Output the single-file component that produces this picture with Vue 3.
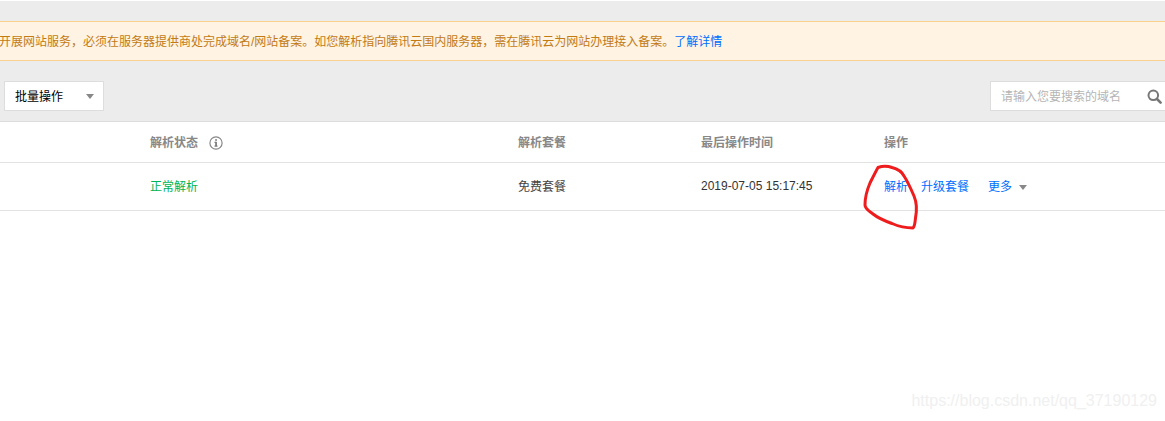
<script setup>
const headers = ['解析套餐', '最后操作时间', '操作']
const actions = ['升级套餐']
</script>

<template>
  <div class="page">
    <div class="gray-top">
      <div class="notice">
        <span>开展网站服务，必须在服务器提供商处完成域名/网站备案。如您解析指向腾讯云国内服务器，需在腾讯云为网站办理接入备案。</span><a class="link">了解详情</a>
      </div>
      <div class="toolbar">
        <div class="batch">
          <span>批量操作</span>
          <i class="caret batch-caret"></i>
        </div>
        <div class="search">
          <span class="placeholder">请输入您要搜索的域名</span>
          <svg class="search-icon" width="15" height="15" viewBox="0 0 15 15">
            <circle cx="6.300" cy="6.300" r="4.800" fill="none" stroke="#777" stroke-width="2" />
            <path d="M10 10 13.600 13.600" stroke="#777" stroke-width="2.600" stroke-linecap="round" />
          </svg>
        </div>
      </div>
    </div>

    <div class="row head">
      <div class="status-head">
        <span>解析状态</span>
        <svg class="info" width="14" height="14" viewBox="0 0 14 14">
          <circle cx="7" cy="7" r="6.100" fill="none" stroke="#888" stroke-width="1.200" />
          <rect x="6.200" y="5.800" width="1.700" height="4.600" fill="#777" />
          <rect x="5.400" y="5.800" width="1.600" height="1" fill="#777" />
          <rect x="5.400" y="9.600" width="3.200" height="1" fill="#777" />
          <rect x="6.200" y="3.200" width="1.700" height="1.600" fill="#777" />
        </svg>
      </div>
      <div v-for="h in headers" :key="h">{{ h }}</div>
    </div>

    <div class="row body">
      <div class="ok">正常解析</div>
      <div class="plan">免费套餐</div>
      <div class="time">2019-07-05 15:17:45</div>
      <div class="ops">
        <a class="link">解析</a>
        <a v-for="a in actions" :key="a" class="link">{{ a }}</a>
        <a class="link more">更多<i class="caret more-caret"></i></a>
      </div>
    </div>

    <svg class="scribble" width="1165" height="421" viewBox="0 0 1165 421">
      <path d="M878 167.500C882 166 888 166 892 167.500C898 169 902 172 904 176C908 182 911 189 914 196C917 203 917 210 915.500 218C915 222 915 226 913 228C907 228 900 227 892 223.500C885 221 878 218 873 214C869 211 865 209 865 205C865 198 867 190 870 183C873 177 876 171 878 167.500Z" fill="none" stroke="#ee1c1c" stroke-width="3" stroke-linejoin="round" />
    </svg>

    <div class="watermark">https://blog.csdn.net/qq_37190129</div>
  </div>
</template>

<style>
html, body { margin: 0; background: #fff; }
</style>

<style scoped>
.page {
  position: relative;
  width: 1165px;
  height: 421px;
  overflow: hidden;
  background: #fff;
  font-family: "Liberation Sans", "Noto Sans CJK SC", sans-serif;
  font-size: 12px;
  color: #333;
}
.gray-top {
  margin-top: 1px;
  padding-top: 20px;
  height: 121px;
  box-sizing: border-box;
  background: #ececec;
  border-bottom: 1px solid #ddd;
}
.notice {
  height: 40px;
  box-sizing: border-box;
  line-height: 40px;
  background: #fff3e3;
  border-top: 1px solid #fbd08e;
  border-bottom: 1px solid #fbd08e;
  color: #c27a13;
  white-space: nowrap;
  text-indent: -1px;
}
.link { color: #006eff; }
.toolbar {
  display: flex;
  justify-content: space-between;
  padding: 20px 0 0 4px;
}
.batch {
  width: 100px;
  height: 30px;
  box-sizing: border-box;
  display: flex;
  align-items: center;
  justify-content: space-between;
  padding: 0 9px 2px 10px;
  background: #fff;
  border: 1px solid #ddd;
  color: #000;
}
.caret {
  display: inline-block;
  width: 0;
  height: 0;
  border-left: 4px solid transparent;
  border-right: 4px solid transparent;
  border-top: 5px solid #888;
}
.batch-caret { margin-top: 2px; }
.search {
  width: 180px;
  margin-right: -5px;
  height: 30px;
  box-sizing: border-box;
  display: flex;
  align-items: center;
  padding: 0 0 2px 10px;
  background: #fff;
  border: 1px solid #ddd;
}
.placeholder { color: #b5b5b5; }
.search-icon { margin-left: 26px; margin-top: 2px; }
.row {
  display: grid;
  grid-template-columns: 368px 183px 183px 1fr;
  padding-left: 150px;
  align-items: center;
  border-bottom: 1px solid #e2e2e2;
}
.head {
  height: 38px;
  padding-bottom: 2px;
  color: #888;
  font-weight: 700;
}
.status-head {
  display: flex;
  align-items: center;
  gap: 11px;
}
.info { margin-top: 4px; }
.body {
  height: 45px;
  padding-bottom: 2px;
}
.ok { color: #00b454; }
.plan { color: #444; }
.time { color: #333; }
.ops {
  display: flex;
  align-items: center;
  gap: 13px;
}
.more { margin-left: 6px; }
.more-caret { margin-left: 7px; vertical-align: 1px; }
.scribble {
  position: absolute;
  left: 0;
  top: 0;
  pointer-events: none;
}
.watermark {
  position: absolute;
  right: 8px;
  top: 392px;
  font-size: 16px;
  color: #f0f0f0;
}
</style>
